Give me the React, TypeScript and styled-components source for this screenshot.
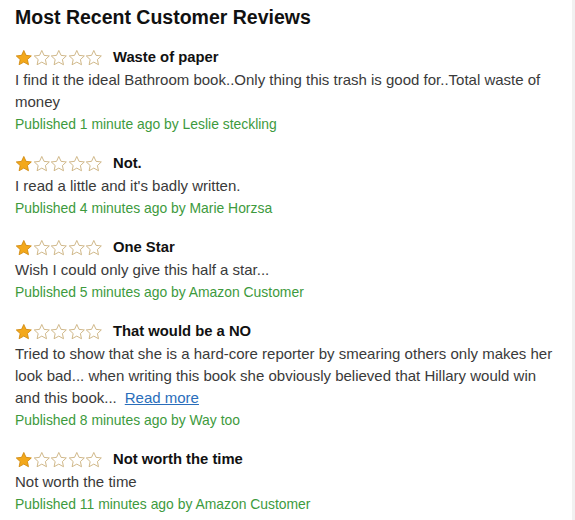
import React from "react";
import styled, { createGlobalStyle } from "styled-components";

const Global = createGlobalStyle`
  body {
    margin: 0;
    background: #fff;
    font-family: Arial, "Liberation Sans", sans-serif;
  }
`;

const Page = styled.div`
  padding: 5px 14px 0 15px;
  border-right: 3px solid #f1f1f1;
  min-height: 520px;
  box-sizing: border-box;
`;

const Heading = styled.h2`
  margin: 0 0 16px;
  font-size: 19.5px;
  line-height: 24px;
  font-weight: bold;
  color: #111;
`;

const Review = styled.div`
  margin-bottom: 15px;
`;

const Header = styled.div`
  display: flex;
  align-items: center;
  height: 24px;
  gap: 10px;
`;

const Stars = styled.div`
  display: flex;
  align-items: center;
`;

const Title = styled.span`
  font-size: 14.8px;
  font-weight: bold;
  color: #111;
`;

const Body = styled.p`
  margin: 0;
  font-size: 15px;
  line-height: 22px;
  color: #3a3a3a;
`;

const More = styled.a`
  color: #2a6ebb;
  text-decoration: underline;
  margin-left: 8px;
  cursor: pointer;
`;

const Meta = styled.div`
  font-size: 13.9px;
  line-height: 23px;
  color: #3d9a3d;
`;

const STAR =
  "M9 1.3l2.3 5 5.4.6-4 3.7 1.1 5.3L9 13.2l-4.8 2.7 1.1-5.3-4-3.7 5.4-.6z";

function Star({ filled }: { filled: boolean }) {
  return (
    <svg width="17.6" height="17" viewBox="0 0 18 17">
      <path
        d={STAR}
        fill={filled ? "#f3a81b" : "#fff"}
        stroke={filled ? "#d08a10" : "#c9ae7a"}
        strokeWidth="0.9"
        strokeLinejoin="round"
      />
    </svg>
  );
}

const reviews = [
  {
    title: "Waste of paper",
    body: "I find it the ideal Bathroom book..Only thing this trash is good for..Total waste of money",
    meta: "Published 1 minute ago by Leslie steckling",
  },
  {
    title: "Not.",
    body: "I read a little and it's badly written.",
    meta: "Published 4 minutes ago by Marie Horzsa",
  },
  {
    title: "One Star",
    body: "Wish I could only give this half a star...",
    meta: "Published 5 minutes ago by Amazon Customer",
  },
  {
    title: "That would be a NO",
    body: "Tried to show that she is a hard-core reporter by smearing others only makes her look bad... when writing this book she obviously believed that Hillary would win and this book...",
    more: true,
    meta: "Published 8 minutes ago by Way too",
  },
  {
    title: "Not worth the time",
    body: "Not worth the time",
    meta: "Published 11 minutes ago by Amazon Customer",
  },
];

export default function App() {
  return (
    <>
      <Global />
      <Page>
        <Heading>Most Recent Customer Reviews</Heading>
        {reviews.map((r, i) => (
          <Review key={i}>
            <Header>
              <Stars>
                {[0, 1, 2, 3, 4].map((s) => (
                  <Star key={s} filled={s === 0} />
                ))}
              </Stars>
              <Title>{r.title}</Title>
            </Header>
            <Body>
              {r.body}
              {r.more && <More>Read more</More>}
            </Body>
            <Meta>{r.meta}</Meta>
          </Review>
        ))}
      </Page>
    </>
  );
}
